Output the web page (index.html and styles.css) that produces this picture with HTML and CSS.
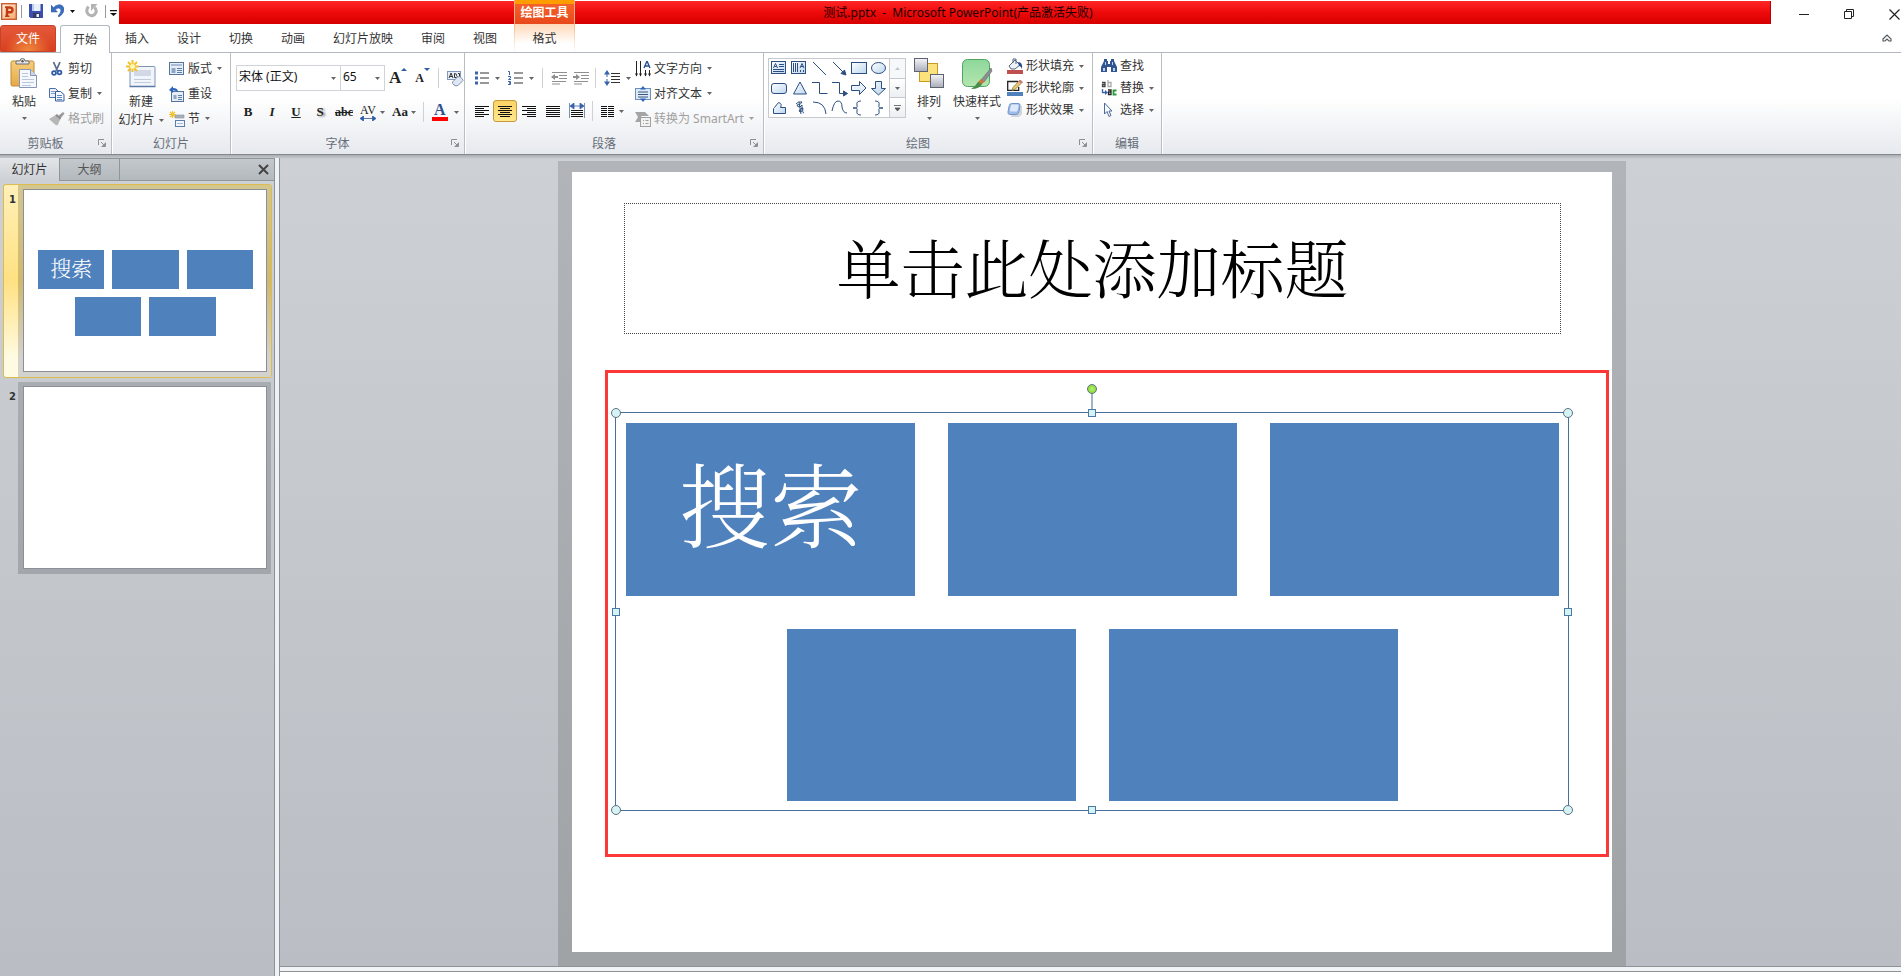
FILE: index.html
```html
<!DOCTYPE html>
<html lang="zh-CN">
<head>
<meta charset="utf-8">
<title>测试.pptx - Microsoft PowerPoint</title>
<link rel="stylesheet" href="styles.css">
</head>
<body>
<svg class="defs" aria-hidden="true">
  <defs>
    <linearGradient id="gBlue" x1="0" y1="0" x2="1" y2="1"><stop offset="0" stop-color="#fff"/><stop offset="1" stop-color="#bcd6ef"/></linearGradient>
    <linearGradient id="gGrey" x1="0" y1="0" x2="0" y2="1"><stop offset="0" stop-color="#f4f5f8"/><stop offset="1" stop-color="#a9adb8"/></linearGradient>
    <linearGradient id="gGold" x1="0" y1="0" x2="0" y2="1"><stop offset="0" stop-color="#f7cf78"/><stop offset="1" stop-color="#e5a94a"/></linearGradient>
    <linearGradient id="gGreen" x1="0" y1="0" x2="0" y2="1"><stop offset="0" stop-color="#8ed79b"/><stop offset="1" stop-color="#b4e6ae"/></linearGradient>
    <linearGradient id="gOrange" x1="0" y1="0" x2="1" y2="1"><stop offset="0" stop-color="#fff3e4"/><stop offset="1" stop-color="#f6a86a"/></linearGradient>
    <symbol id="caret" viewBox="0 0 5 3"><path d="M0 0h5L2.500 3z" fill="currentColor"/></symbol>
    <symbol id="launch" viewBox="0 0 8 8"><path d="M.5 6V.5H6M3 3l3.500 3.500M7.500 3.500v4h-4" fill="none" stroke="#8b8f96"/><path d="M7 4v3H4z" fill="#8b8f96"/></symbol>
  </defs>
</svg>

<div class="app">
  <header class="titlebar">
    <div class="quick">
      <svg class="logo" width="16" height="17" viewBox="0 0 16 17"><rect x=".7" y=".7" width="14.600" height="15.600" fill="url(#gOrange)" stroke="#cf5b2e" stroke-width="1.400"/><path d="M6 13V4.500h2.500q3 0 3 2.400T8.500 9.300H6" fill="none" stroke="#c23b12" stroke-width="2.400"/><path d="M4 13.300h4.500M4 4.200h2" stroke="#c23b12" stroke-width="1.500"/></svg>
      <i class="qsep"></i>
      <button class="qbtn save" aria-label="保存"><svg width="14" height="14" viewBox="0 0 14 14"><path d="M0 0h14v14H1.500L0 12.500z" fill="#3b4fae"/><path d="M3 0h8.500v7H3z" fill="#e9f0fb"/><path d="M3 0h2v7H3z" fill="#b9cdf0"/><path d="M4 9h7v5H4z" fill="#333b63"/><path d="M7.500 10h2.500v3H7.500z" fill="#eef"/></svg></button>
      <button class="qbtn undo" aria-label="撤消"><svg width="13" height="14" viewBox="0 0 13 14"><path d="M0 1v7h6.500L4.300 5.800Q7 3 9 4.500q2.500 2.300-2 7.500l1 1q6-4.500 4.800-9Q11.300.3 7.500.8 4.500 1.200 2.500 3.600z" fill="#3a6fc0" stroke="#2a56a0" stroke-width=".5"/></svg></button>
      <svg class="ucaret" width="5" height="3"><use href="#caret"/></svg>
      <button class="qbtn redo" aria-label="恢复"><svg width="13" height="14" viewBox="0 0 13 14"><path d="M3.500 2.500Q0 7 3.500 10.500q5 3 7.500-2 .8-3-1.500-5" fill="none" stroke="#b3b3b3" stroke-width="3"/><path d="M6 0h6.500L6 7z" fill="#b3b3b3"/></svg></button>
      <i class="qsep"></i>
      <button class="qbtn more" aria-label="自定义"><svg width="7" height="6" viewBox="0 0 7 6"><path d="M0 0h7v1.200H0zM0 3h7L3.500 6z" fill="#111"/></svg></button>
    </div>
    <div class="caption">测试.pptx&nbsp; -&nbsp; Microsoft PowerPoint(产品激活失败)</div>
    <div class="context">绘图工具</div>
    <div class="winctl">
      <button aria-label="最小化"><svg width="11" height="11"><path d="M0 5.500h10" stroke="#222"/></svg></button>
      <button aria-label="还原"><svg width="11" height="11"><path d="M.5 2.500h7v7h-7zM2.500 2V.5h7v7H8" fill="none" stroke="#222"/></svg></button>
      <button aria-label="关闭"><svg width="11" height="11"><path d="M.5.5l10 10M10.500.5l-10 10" stroke="#222" stroke-width="1.200"/></svg></button>
    </div>
  </header>

  <nav class="tabs">
    <button class="file">文件</button>
    <button class="tab on">开始</button>
    <button class="tab">插入</button>
    <button class="tab">设计</button>
    <button class="tab">切换</button>
    <button class="tab">动画</button>
    <button class="tab">幻灯片放映</button>
    <button class="tab">审阅</button>
    <button class="tab">视图</button>
    <button class="tab format">格式</button>
    <button class="fold" aria-label="折叠功能区"><svg width="10" height="8" viewBox="0 0 10 8"><path d="M1 5L5 1l4 4v2H7L5 5 3 7H1z" fill="none" stroke="#555b63" stroke-width="1.200"/></svg></button>
  </nav>

  <section class="ribbon">
    <div class="group clip">
      <div class="gbody">
        <button class="big paste">
          <svg width="28" height="32" viewBox="0 0 28 32"><rect x="1" y="3" width="23" height="25" rx="1.500" fill="url(#gGold)" stroke="#c08a35"/><path d="M6 6V3h4q0-2.500 2.500-2.500T15 3h4v3z" fill="#e8e8ea" stroke="#6d6d72"/><circle cx="12.500" cy="3.200" r="1.200" fill="#555"/><path d="M9.500 11.500h11l6 6v12h-17z" fill="#f4f7fc" stroke="#8796b4"/><path d="M20.500 11.500v6h6" fill="#cbd7ea" stroke="#8796b4"/><path d="M12 15.500h6M12 18.500h6M12 21.500h12M12 24.500h12M12 27.500h9" stroke="#b9c5d8"/></svg>
          <span>粘贴</span><svg class="caret" width="5" height="3"><use href="#caret"/></svg>
        </button>
        <div class="stack">
          <button class="cmd"><svg width="16" height="16" viewBox="0 0 16 16"><path d="M4.500 1l4 9M11 1L7 10" stroke="#5b7086" stroke-width="1.800" fill="none"/><circle cx="5" cy="12" r="1.900" fill="none" stroke="#2f5da8" stroke-width="1.800"/><circle cx="10.500" cy="11.500" r="1.900" fill="none" stroke="#2f5da8" stroke-width="1.800"/></svg>剪切</button>
          <button class="cmd"><svg width="16" height="16" viewBox="0 0 16 16"><path d="M.5 2.500h6l3 3v6h-9z" fill="#eaf1fb" stroke="#4d6fa8"/><path d="M2 5.500h4M2 7.500h4" stroke="#7f9fd0"/><path d="M6.500 5.500h5l3.500 3v6.500H6.500z" fill="#f4f8ff" stroke="#345a9a"/><path d="M8 9.500h5M8 11.500h5M8 13.500h5" stroke="#5d86c4"/></svg>复制<svg class="caret" width="5" height="3"><use href="#caret"/></svg></button>
          <button class="cmd off"><svg width="16" height="16" viewBox="0 0 16 16"><path d="M14 1l1.500 1.500-4 5-3-2z" fill="#9a9a9a"/><path d="M0 8l6-3.500 5 4.500-2.500 5.500-2.500-1z" fill="#b6b6b6"/><path d="M6 4.500l2-1.500 4 4-1 2z" fill="#8d8d8d"/></svg>格式刷</button>
        </div>
      </div>
      <div class="gname wide">剪贴板<svg class="launch" width="8" height="8"><use href="#launch"/></svg></div>
    </div>

    <div class="group slides">
      <div class="gbody">
        <button class="big newslide">
          <svg width="30" height="30" viewBox="0 0 30 30"><rect x="4" y="6.500" width="25" height="20" rx="1" fill="#f2f5fb" stroke="#7e94b8"/><rect x="8" y="10" width="17" height="6" fill="#d2d8e6"/><path d="M8 19.500h17M8 22.500h17" stroke="#c3cbdb"/><path d="M3.500 26.500h26" stroke="#5c7aa8" stroke-width="1.500"/><path d="M6.500 0v12M0 6.500h13M2 2l9 9M11 2l-9 9" stroke="#f2c12a" stroke-width="2"/><circle cx="6.500" cy="6.500" r="2.500" fill="#fff7b8"/></svg>
          <span>新建</span><span class="line">幻灯片<svg class="caret" width="5" height="3"><use href="#caret"/></svg></span>
        </button>
        <div class="stack">
          <button class="cmd"><svg width="16" height="14" viewBox="0 0 16 14"><rect x=".5" y=".5" width="14" height="12" fill="#e6edf6" stroke="#55749c"/><path d="M2 3h11" stroke="#a9bcd4" stroke-width="2"/><path d="M2.500 6h4v5h-4z" fill="#8ea6c4"/><path d="M8 6.500h5M8 8.500h5M8 10.500h5" stroke="#5c7fa8"/></svg>版式<svg class="caret" width="5" height="3"><use href="#caret"/></svg></button>
          <button class="cmd"><svg width="16" height="16" viewBox="0 0 16 16"><rect x="2.500" y="5.500" width="12" height="10" fill="#e6edf6" stroke="#55749c"/><path d="M4.500 9h3v4h-3z" fill="#8ea6c4"/><path d="M9 9.500h4M9 11.500h4M9 13.500h4" stroke="#5c7fa8"/><path d="M0 4l4-4v2q5 0 5 4-2-2-5-1.500V7z" fill="#2f63bd"/></svg>重设</button>
          <button class="cmd"><svg width="16" height="16" viewBox="0 0 16 16"><path d="M6 4h9v3H6z" fill="#aab1bf" stroke="#8890a0" stroke-width=".6"/><rect x="6.500" y="9.500" width="9" height="6" fill="#f2f5fb" stroke="#5c7fa8"/><path d="M8 12.500h6" stroke="#a9bcd4"/><path d="M3.500 0v7M0 3.500h7M1 1l5 5M6 1L1 6" stroke="#efc23a" stroke-width="1.200"/></svg>节<svg class="caret" width="5" height="3"><use href="#caret"/></svg></button>
        </div>
      </div>
      <div class="gname">幻灯片</div>
    </div>

    <div class="group font">
      <div class="gbody col">
        <div class="row top">
          <label class="combo name"><select aria-label="字体"><option>宋体 (正文)</option></select><svg class="caret" width="5" height="3"><use href="#caret"/></svg></label>
          <label class="combo size"><select aria-label="字号"><option>65</option></select><svg class="caret" width="5" height="3"><use href="#caret"/></svg></label>
          <button class="glyph grow">A<svg width="6" height="3"><path d="M0 3h6L3 0z" fill="#2f5da8"/></svg></button>
          <button class="glyph shrink">A<svg width="6" height="3"><path d="M0 0h6L3 3z" fill="#2f5da8"/></svg></button>
          <i class="sep"></i>
          <button class="ico" aria-label="清除格式"><svg width="17" height="17" viewBox="0 0 17 17"><rect x=".5" y="1.500" width="13" height="8" fill="#e8eef8" stroke="#7f98bf"/><path d="M2 8l2-5 2 5M3 6.500h2M7.500 3.500v4h2q1.500-1 0-2 1-1.500-2-2M11 3.500h1.500v4H11" fill="none" stroke="#333"/><path d="M5.500 12l5-5q2-1 3.500.5t2 3l-5 5q-2 1-4-.5t-1.500-3z" fill="#dfe7f3" stroke="#8294b3"/></svg></button>
        </div>
        <div class="row bottom">
          <button class="glyph bold">B</button><button class="glyph italic">I</button><button class="glyph under">U</button><button class="glyph shadow">S</button><button class="glyph abc">abc</button>
          <button class="glyph av"><span>AV</span><svg width="16" height="5" viewBox="0 0 16 5"><path d="M0 2.500L3.500 0v5zM16 2.500L12.500 0v5zM3 2.500h10" fill="#2f5da8" stroke="#2f5da8" stroke-width=".8"/></svg></button><svg class="caret" width="5" height="3"><use href="#caret"/></svg>
          <button class="glyph aa">Aa</button><svg class="caret" width="5" height="3"><use href="#caret"/></svg>
          <i class="sep"></i>
          <button class="glyph color"><span>A</span></button><svg class="caret" width="5" height="3"><use href="#caret"/></svg>
        </div>
      </div>
      <div class="gname wide">字体<svg class="launch" width="8" height="8"><use href="#launch"/></svg></div>
    </div>

    <div class="group para">
      <div class="gbody">
        <div class="pcol">
          <div class="row top">
            <button class="ico" aria-label="项目符号"><svg width="14" height="14" viewBox="0 0 14 14"><path d="M5 2h9M5 7h9M5 12h9" stroke="#333" stroke-width="1.200"/><path d="M0 .5h3v3H0zM0 5.500h3v3H0zM0 10.500h3v3H0z" fill="#3a63ad"/></svg></button><svg class="caret" width="5" height="3"><use href="#caret"/></svg>
            <button class="ico" aria-label="编号"><svg width="15" height="14" viewBox="0 0 15 14"><path d="M6 2h9M6 7h9M6 12h9" stroke="#333" stroke-width="1.200"/><path d="M0 .5h1.500V4M0 5.500h2.500v1.500L.5 8.500H3M0 10.500h2.500V12H1h1.500v1.500H0" fill="none" stroke="#3a63ad"/></svg></button><svg class="caret" width="5" height="3"><use href="#caret"/></svg>
            <i class="sep"></i>
            <button class="ico" aria-label="降低列表级别"><svg width="16" height="14" viewBox="0 0 16 14"><path d="M1 1.500h15M8 4.500h8M8 7.500h8M1 10.500h14M1 13h8" stroke="#8f8f8f"/><path d="M0 6l4-3v6z" fill="#8f8f8f"/><path d="M3 6h4" stroke="#8f8f8f" stroke-width="2"/></svg></button>
            <button class="ico" aria-label="提高列表级别"><svg width="16" height="14" viewBox="0 0 16 14"><path d="M1 1.500h15M8 4.500h8M8 7.500h8M1 10.500h14M1 13h8" stroke="#8f8f8f"/><path d="M7 6L3 3v6z" fill="#8f8f8f"/><path d="M0 6h4" stroke="#8f8f8f" stroke-width="2"/></svg></button>
            <i class="sep"></i>
            <button class="ico" aria-label="行距"><svg width="16" height="16" viewBox="0 0 16 16"><path d="M7 3.500h9M7 6.500h9M7 9.500h9M7 12.500h9" stroke="#333" stroke-width="1.200"/><path d="M3 0l3 4.500H0zM3 16l3-4.500H0z" fill="#3a63ad"/><path d="M3 4v8" stroke="#3a63ad" stroke-dasharray="3 2"/></svg></button><svg class="caret" width="5" height="3"><use href="#caret"/></svg>
          </div>
          <div class="row bottom">
            <button class="ico" aria-label="左对齐"><svg width="14" height="11"><path d="M0 .5h14M0 2.500h9M0 4.500h14M0 6.500h9M0 8.500h14M0 10.500h9" stroke="#111"/></svg></button>
            <button class="ico active" aria-label="居中"><svg width="14" height="11"><path d="M0 .5h14M2 2.500h10M0 4.500h14M2 6.500h10M0 8.500h14M2 10.500h10" stroke="#111"/></svg></button>
            <button class="ico" aria-label="右对齐"><svg width="14" height="11"><path d="M0 .5h14M5 2.500h9M0 4.500h14M5 6.500h9M0 8.500h14M5 10.500h9" stroke="#111"/></svg></button>
            <button class="ico" aria-label="两端对齐"><svg width="14" height="11"><path d="M0 .5h14M0 2.500h14M0 4.500h14M0 6.500h14M0 8.500h14M0 10.500h14" stroke="#111"/></svg></button>
            <button class="ico" aria-label="分散对齐"><svg width="16" height="16"><path d="M.5 0v15M15.500 0v15" stroke="#7891b5"/><path d="M1 3l4-3v6zM15 3l-4-3v6zM4 3h8" fill="#3a63ad" stroke="#3a63ad" stroke-width=".8"/><path d="M2 7.500h12M2 9.500h12M2 11.500h12M2 13.500h12" stroke="#111"/></svg></button>
            <i class="sep"></i>
            <button class="ico" aria-label="分栏"><svg width="13" height="11"><path d="M0 .5h6M0 2.500h6M0 4.500h6M0 6.500h6M0 8.500h6M0 10.500h6M7 .5h6M7 2.500h6M7 4.500h6M7 6.500h6M7 8.500h6M7 10.500h6" stroke="#111"/></svg></button><svg class="caret" width="5" height="3"><use href="#caret"/></svg>
          </div>
        </div>
        <div class="stack">
          <button class="cmd"><svg width="16" height="16" viewBox="0 0 16 16"><path d="M1.500 0v15M5.500 0v15M10.500 9v6M14.500 9v6" stroke="#222"/><path d="M0 12.500h3L1.500 15.500zM4 12.500h3L5.500 15.500zM9 12.500h3l-1.500 3zM13 12.500h3l-1.500 3z" fill="#222"/><path d="M9 7l3-7 3 7M10 5h4" stroke="#27508f" stroke-width="1.400" fill="none"/></svg>文字方向<svg class="caret" width="5" height="3"><use href="#caret"/></svg></button>
          <button class="cmd"><svg width="16" height="16" viewBox="0 0 16 16"><rect x=".5" y="2.500" width="15" height="11" fill="#dcebfa" stroke="#6d8fbd"/><path d="M3 6h10M3 8.500h10M3 11h10" stroke="#3c557a"/><path d="M8 0l3 3.500H5zM8 16l3-3.500H5z" fill="#2f63bd"/></svg>对齐文本<svg class="caret" width="5" height="3"><use href="#caret"/></svg></button>
          <button class="cmd off"><svg width="16" height="16" viewBox="0 0 16 16"><path d="M0 1h10l4 4H6l2 3-3 3H0l3-5z" fill="#a5a5a5"/><rect x="5.500" y="6.500" width="10" height="9" fill="#f2f2f2" stroke="#a0a0a0"/><path d="M8 9.500h1M10.500 9.500h3M8 12.500h1M10.500 12.500h3" stroke="#a0a0a0"/></svg>转换为 SmartArt<svg class="caret" width="5" height="3"><use href="#caret"/></svg></button>
        </div>
      </div>
      <div class="gname wide">段落<svg class="launch" width="8" height="8"><use href="#launch"/></svg></div>
    </div>

    <div class="group draw">
      <div class="gbody">
        <div class="gallery">
          <svg class="shapes" width="120" height="58" viewBox="0 0 120 58" fill="none" stroke="#2d4f80">
            <rect x="2.500" y="2.500" width="14" height="12" fill="url(#gBlue)"/><path d="M4.500 9l2-4.500 2 4.500M5.500 7.500h2M10 5.500h5M10 7.500h5M4 10.500h11M4 12.500h11"/>
            <rect x="22.500" y="2.500" width="14" height="12" fill="url(#gBlue)"/><path d="M31 9l2-4.500 2 4.500M32 7.500h2M24.500 4v9M26.500 4v9M28.500 4v9M31.500 11v2M34.500 11v2"/>
            <path d="M44 3l13 13M64 3l11 11"/><path d="M77 16l-5-1.500 3.500-3.500z" fill="#2d4f80"/>
            <rect x="82.500" y="3.500" width="15" height="11" fill="url(#gBlue)"/><ellipse cx="109.500" cy="9" rx="7" ry="5.500" fill="url(#gBlue)"/>
            <rect x="2.500" y="24.500" width="15" height="10" rx="2.500" fill="url(#gBlue)"/><path d="M31 23l6.500 12h-13z" fill="url(#gBlue)"/>
            <path d="M43 23.500h7.500v11h8M63 23.500h7.500v11h6"/><path d="M78.500 34.500l-4-2.500v5z" fill="#2d4f80"/>
            <path d="M82.500 26.500h8v-4l6.500 6.500-6.500 6.500v-4h-8zM106.500 22.500h6v7h4l-7 6.500-7-6.500h4z" fill="url(#gBlue)"/>
            <path d="M4.500 54.500h12v-6h-5q2-4-2-5l-4 5-1 1z" fill="url(#gBlue)"/>
            <path d="M27 45q2-3 6-2-1 3-5 3 0 2 3 2l2-2v6q-2 2-3 0 1-3 4-3-1 5 1 5M30 43l2 12"/>
            <path d="M44 43q12 0 13 12M63 52q2-10 6-10t4 6q1 6 5 6M92 42q-5 0-4 4t-4 3q5-1 4 3t4 4M106 42q5 0 4 4t4 3q-5-1-4 3t-4 4"/>
          </svg>
          <div class="gscroll">
            <button class="dim" aria-label="上一行"><svg width="5" height="3"><path d="M0 3h5L2.500 0z" fill="#c4c6ca"/></svg></button>
            <button aria-label="下一行"><svg class="caret" width="5" height="3"><use href="#caret"/></svg></button>
            <button aria-label="其他"><svg width="7" height="6"><path d="M0 .5h7M1 3h5L3.500 6z" stroke="#555" stroke-width=".8" fill="#555"/></svg></button>
          </div>
        </div>
        <button class="big arrange">
          <svg width="32" height="32" viewBox="0 0 32 32"><rect x="6.500" y="5.500" width="18" height="18" fill="#fbe27c" stroke="#c99a1c"/><rect x="1.500" y=".5" width="13" height="13" fill="url(#gGrey)" stroke="#5d6270"/><rect x="17.500" y="16.500" width="13" height="13" fill="url(#gGrey)" stroke="#5d6270"/></svg>
          <span>排列</span><svg class="caret" width="5" height="3"><use href="#caret"/></svg>
        </button>
        <button class="big quickst">
          <svg width="32" height="32" viewBox="0 0 32 32"><rect x="1.500" y="1.500" width="27" height="27" rx="5" fill="url(#gGreen)" stroke="#4fa661"/><path d="M30 10L20 22l3 2 8-11z" fill="#8a8f95" stroke="#666" stroke-width=".6"/><path d="M20 21l3.500 2.500-3 3-4-2z" fill="#c9763b"/><path d="M17 24l4 2q-2 5-11 5 4-2 7-7z" fill="#4a8c4c"/></svg>
          <span>快速样式</span><svg class="caret" width="5" height="3"><use href="#caret"/></svg>
        </button>
        <div class="stack tight">
          <button class="cmd"><svg width="16" height="16" viewBox="0 0 16 16"><path d="M0 12h16v4H0z" fill="#c0504d"/><path d="M2 8l6-6 5 5-5 4H4z" fill="#eef2f8" stroke="#54647e"/><path d="M6 5V1h3v5" fill="none" stroke="#54647e"/><path d="M11 4q5 0 4 7-1-3-3-3z" fill="#2b4c8c"/></svg>形状填充<svg class="caret" width="5" height="3"><use href="#caret"/></svg></button>
          <button class="cmd"><svg width="16" height="16" viewBox="0 0 16 16"><path d="M0 12h16v4H0z" fill="#4f81bd"/><path d="M11 1.500H.7v8.800h11V7" fill="#fff" stroke="#222" stroke-width="1.300"/><path d="M13 0l2.500 2L8 9.500 5 10.500 6 7.500z" fill="#e9c868" stroke="#7b6430" stroke-width=".7"/><path d="M13 0l2.500 2-1.500 1.500L11.500 1.500z" fill="#d4758a"/></svg>形状轮廓<svg class="caret" width="5" height="3"><use href="#caret"/></svg></button>
          <button class="cmd"><svg width="16" height="16" viewBox="0 0 16 16"><path d="M6 4h9v8l-3 3H4z" fill="#b5bdca" opacity=".6"/><path d="M4.500 1.500h6.500q2.500 0 2 2L12 9.500q-.5 3-3 3H3q-2.500 0-2-2.500l1-5.500q.5-3 2.500-3z" fill="#9dbbe6" stroke="#7295cb"/><path d="M5 2.500h5.500q1.300 0 1 1.500l-.8 4q-.3 1.500-1.500 1.500H4q-1.200 0-1-1.500l.7-4Q4 2.500 5 2.500z" fill="#dce9fb"/></svg>形状效果<svg class="caret" width="5" height="3"><use href="#caret"/></svg></button>
        </div>
      </div>
      <div class="gname wide">绘图<svg class="launch" width="8" height="8"><use href="#launch"/></svg></div>
    </div>

    <div class="group edit">
      <div class="gbody">
        <div class="stack tight">
          <button class="cmd"><svg width="16" height="14" viewBox="0 0 16 14"><path d="M3 0h3v2h1v3h2V2h1V0h3v2l3 6v5h-6V8H6v5H0V8l3-6z" fill="#33558f"/><path d="M2 9h2v3H2zM12 9h2v3h-2zM4 3h1v3H4zM11 3h1v3h-1z" fill="#b9d2f2"/></svg>查找</button>
          <button class="cmd"><svg width="16" height="16" viewBox="0 0 16 16"><g fill="none" stroke-width="1.300"><path d="M1 2.500h3v4H1.500V4.500H4" stroke="#444"/><path d="M7 0v6.500h3v-4H7" stroke="#aaa"/><path d="M1.500 9v3.500h3" stroke="#3a63ad"/><path d="M7 10h3v4.500H7.500V12H10" stroke="#222"/><path d="M15.500 10.500h-3v4h3" stroke="#2a9a3c" stroke-width="1.800"/></g><path d="M4 10l3 2.500L4 15z" fill="#3a63ad"/></svg>替换<svg class="caret" width="5" height="3"><use href="#caret"/></svg></button>
          <button class="cmd"><svg width="16" height="16" viewBox="0 0 16 16"><path d="M3.500 1v11l2.500-2.500 2 5 2-1-2-4.500H11z" fill="#f5f9ff" stroke="#4d6a9a"/></svg>选择<svg class="caret" width="5" height="3"><use href="#caret"/></svg></button>
        </div>
      </div>
      <div class="gname">编辑</div>
    </div>
  </section>

  <main class="work">
    <aside class="pane">
      <div class="ptabs">
        <button class="ptab on">幻灯片</button>
        <button class="ptab">大纲</button>
        <button class="pclose" aria-label="关闭"><svg width="11" height="11"><path d="M1 1l9 9M10 1l-9 9" stroke="#444" stroke-width="2"/></svg></button>
      </div>
      <div class="thumb current">
        <span class="num">1</span>
        <div class="mat"><div class="mini">
          <div class="tiles"><div class="tile">搜索</div><div class="tile"></div><div class="tile"></div><div class="tile shift"></div><div class="tile"></div></div>
        </div></div>
      </div>
      <div class="thumb">
        <span class="num">2</span>
        <div class="mat"><div class="mini"></div></div>
      </div>
    </aside>
    <div class="splitter"></div>
    <div class="editor">
      <div class="canvas">
        <div class="halo">
          <article class="slide">
            <h1 class="heading">单击此处添加标题</h1>
            <div class="mark">
              <div class="selection">
                <div class="tiles"><div class="tile">搜索</div><div class="tile"></div><div class="tile"></div><div class="tile shift"></div><div class="tile"></div></div>
                <i class="stem"></i>
                <i class="h c tl"></i><i class="h c tr"></i><i class="h c bl"></i><i class="h c br"></i>
                <i class="h q tm"></i><i class="h q bm"></i><i class="h q ml"></i><i class="h q mr"></i>
                <i class="h c spin"></i>
              </div>
            </div>
          </article>
        </div>
      </div>
      <div class="notes"></div>
    </div>
  </main>
</div>
</body>
</html>
```

FILE: styles.css
```css
* { box-sizing: border-box; }

body {
  margin: 0;
  background: #fff;
  color: #333;
  font: 12px/16px "Noto Sans", "Noto Sans CJK SC", sans-serif;
}

button {
  margin: 0;
  padding: 0;
  border: 0;
  background: none;
  color: inherit;
  font: inherit;
  white-space: nowrap;
}

svg { display: block; flex: none; }
.defs { position: absolute; width: 0; height: 0; }
.caret { color: #666; }

.app {
  display: flex;
  flex-direction: column;
  height: 100vh;
  overflow: hidden;
}

/* Title bar */
.titlebar {
  position: relative;
  display: flex;
  flex: none;
  height: 24px;
}
.quick {
  display: flex;
  align-items: center;
  width: 119px;
  padding: 0 2px 2px 1px;
}
.qsep { width: 1px; height: 13px; background: #999; }
.logo { margin-right: 4px; }
.save { margin-left: 7px; }
.undo { margin-left: 8px; }
.ucaret { margin: 0 10px 0 6px; color: #111; }
.redo { margin-right: 7px; }
.more { margin: 3px 0 0 4px; }
.caption {
  flex: 1;
  margin-top: 1px;
  padding-left: 27px;
  background: linear-gradient(#ff2626, #ee0a0a 50%, #d60000);
  border-right: 1px solid #b00;
  color: #1c0000;
  line-height: 24px;
  text-align: center;
}
.context {
  position: absolute;
  top: 0;
  left: 514px;
  width: 61px;
  height: 24px;
  border: solid #f7b08a;
  border-width: 0 1px;
  background: linear-gradient(#ff9c00 4px, #f4622a 4px, #e8481a);
  color: #fff;
  font-weight: 700;
  line-height: 26px;
  text-align: center;
}
.winctl {
  display: flex;
  width: 130px;
  padding-left: 11px;
  overflow: hidden;
}
.winctl button {
  display: grid;
  flex: 0 0 45px;
  place-items: center;
  padding-top: 4px;
}

/* Ribbon tabs */
.tabs {
  display: flex;
  flex: none;
  height: 29px;
  border-bottom: 1px solid #b3b8bf;
  line-height: 30px;
}
.file {
  width: 56px;
  margin: 1px 4px 0 0;
  border: 1px solid #c5432a;
  border-radius: 3px 3px 0 0;
  background: radial-gradient(ellipse at 50% 100%, #f08a3c, transparent 60%), linear-gradient(#e4593a, #d8401f);
  color: #fff;
  line-height: 25px;
}
.tab { padding: 0 14px; line-height: 29px; }
.tab.on {
  width: 50px;
  margin: 1px 1px -1px 0;
  padding: 0;
  border: 1px solid #b3b8bf;
  border-bottom: 0;
  border-radius: 3px 3px 0 0;
  background: #fff;
  line-height: 24px;
}
.tab.format {
  width: 61px;
  margin-left: 3px;
  padding: 0;
  border: solid;
  border-width: 0 1px;
  border-image: linear-gradient(#f7b880, #fff) 1;
  background: linear-gradient(#ffd9b8, #fff 70%);
}
.fold { margin: 0 9px 0 auto; }

/* Ribbon */
.ribbon {
  display: flex;
  flex: none;
  height: 102px;
  border-bottom: 1px solid #868a90;
  background: linear-gradient(#fff 45%, #f4f5f7 70%, #e6e9ee);
}
.group {
  display: flex;
  flex: none;
  flex-direction: column;
  border-right: 1px solid #b9bdc4;
  box-shadow: 1px 0 #fff;
}
.gbody { display: flex; height: 80px; }
.gbody.col { flex-direction: column; }
.gname {
  position: relative;
  color: #666d78;
  line-height: 21px;
  text-align: center;
}
.gname.wide { padding-right: 20px; }
.launch { position: absolute; right: 5px; top: 6px; }

.clip { width: 112px; }
.slides { width: 119px; }
.font { width: 234px; }
.para { width: 299px; }
.draw { width: 329px; }
.edit { width: 69px; }

.big {
  display: flex;
  flex-direction: column;
  align-items: center;
  width: 46px;
  padding-top: 5px;
}
.big > svg:first-child { height: 32px; margin-bottom: 4px; }
.big .caret { margin-top: 7px; }
.big.paste { width: 48px; }
.big.newslide { width: 50px; margin-left: 4px; padding-top: 7px; }
.big.newslide > svg:first-child { height: 30px; }
.big .line { display: flex; align-items: center; gap: 4px; margin-top: 2px; }
.big .line .caret { margin: 0; }

.stack { display: flex; flex-direction: column; padding-top: 3px; }
.stack.tight { padding-top: 2px; }
.cmd { display: flex; align-items: center; height: 25px; }
.stack.tight .cmd { height: 22px; }
.cmd > svg:first-child { width: 16px; margin-right: 3px; }
.cmd .caret { margin-left: 5px; }
.cmd.off, .cmd.off .caret { color: #a0a0a0; }
.clip .stack { margin-left: 1px; }
.slides .stack { margin-left: 3px; }

.row { display: flex; align-items: center; }
.sep { width: 1px; height: 20px; background: #cfd1d5; }
.ico { display: grid; place-items: center; height: 22px; }

/* Font group */
.font .top { height: 26px; margin: 12px 0 0 5px; }
.font .bottom { height: 24px; margin: 9px 0 0 5px; }
.combo { position: relative; flex: none; height: 26px; border: 1px solid #d0d3d8; background: #fff; }
.combo select {
  display: block;
  width: 100%;
  height: 22px;
  padding: 0 2px;
  border: 0;
  background: none;
  color: #111;
  font: inherit;
  appearance: none;
}
.combo .caret { position: absolute; top: 11px; right: 4px; }
.combo.name { width: 105px; }
.combo.size { width: 44px; border-left: 0; }
.glyph {
  color: #222;
  font: 700 13px/20px "Liberation Serif", serif;
}
.grow, .shrink { display: flex; }
.grow { margin-left: 4px; font-size: 17px; }
.shrink { margin: 0 8px 0 8px; font-size: 12px; }
.font .top .ico { margin-left: 8px; }
.bold, .italic, .under, .shadow { width: 24px; }
.italic { font-style: italic; }
.under { text-decoration: underline; }
.shadow { text-shadow: 2px 1px 2px #888; }
.abc { width: 24px; font-size: 12px; text-decoration: line-through; }
.av { display: grid; place-items: center; width: 24px; font-size: 12px; line-height: 12px; font-weight: 400; }
.aa { margin: 0 3px 0 7px; }
.font .bottom .sep { margin-left: 7px; }
.color { display: grid; justify-items: center; width: 16px; margin: 0 6px 0 8px; border-bottom: 4px solid #f00; color: #2f5090; font-size: 16px; line-height: 14px; }

/* Paragraph group */
.pcol { width: 168px; padding-left: 10px; }
.pcol .top { height: 22px; margin-top: 14px; }
.pcol .bottom { height: 22px; margin-top: 11px; }
.pcol .top .ico + .caret { margin: 0 8px 0 6px; }
.pcol .top .sep + .ico { margin: 0 6px 0 8px; }
.pcol .top .ico + .sep { margin-left: 6px; }
.pcol .top .sep ~ .ico + .caret { margin: 0; }
.pcol .bottom .ico { width: 24px; }
.pcol .bottom .ico:first-child { width: 18px; justify-content: start; }
.pcol .bottom .active { border: 1px solid #c49a3c; border-radius: 3px; background: linear-gradient(#fbd265, #ffe88e); }
.pcol .bottom .sep { margin: 0 2px 0 3px; }
.para .stack { margin-left: 2px; }

/* Drawing group */
.gallery { display: flex; flex: none; width: 138px; height: 60px; margin: 5px 0 0 4px; border: 1px solid #c6c9ce; background: #fff; }
.gscroll { flex: 1; display: flex; flex-direction: column; border-left: 1px solid #c6c9ce; }
.gscroll button { display: grid; flex: 1; place-items: center; border-bottom: 1px solid #c6c9ce; background: linear-gradient(#fff, #eceef1); }
.gscroll button:last-child { border: 0; }
.gscroll .dim { background: #f7f8f9; }
.big.arrange { width: 46px; flex: none; }
.big.quickst { width: 50px; flex: none; }
.draw .stack { margin-left: 5px; }
.edit .stack { margin-left: 8px; }

/* Workspace */
.work {
  display: flex;
  flex: 1;
  min-height: 0;
  padding-top: 3px;
  background: linear-gradient(#a9acb1, #cdd0d4 4px, #babdc3);
}
.pane { flex: none; width: 275px; border-right: 1px solid #8d9298; }
.ptabs {
  display: flex;
  align-items: center;
  height: 23px;
  margin-bottom: 3px;
  border: solid #8d969b;
  border-width: 1px 0;
  background: linear-gradient(#c3c8cc, #b4b9be);
}
.ptab { width: 60px; height: 21px; border-right: 1px solid #8d969b; color: #555; line-height: 19px; }
.ptab.on { height: 23px; background: linear-gradient(#e2e5e8, #cdd0d4); color: #333; }
.pclose { margin: 0 5px 0 auto; }
.thumb { display: flex; margin: 0 2px 3px 3px; border: 1px solid transparent; border-radius: 3px; }
.thumb.current { border-color: #dcbc4c; background: linear-gradient(#fff0b8, #ffe182 50%, #fffbe2 90%); }
.num { width: 14px; padding: 8px 0 0 3px; color: #333; font: 700 10px/14px "DejaVu Sans", sans-serif; text-align: center; }
.mat { flex: 1; padding: 4px 4px 5px 5px; background: linear-gradient(#a9acb1, #a3a7ab); }
.current .mat { background: linear-gradient(#d3c68f, #d0b96c 50%, #d3d2cc 90%); }
.mini { aspect-ratio: 4 / 3; padding: 60px 13px 35px 14px; border: 1px solid #8c8f99; background: #fff; }
.tiles {
  display: grid;
  grid-template: repeat(2, minmax(0, 1fr)) / repeat(6, minmax(0, 1fr));
  gap: 33px;
  height: 100%;
}
.tile {
  display: grid;
  grid-column: span 2;
  place-items: center;
  padding-bottom: 16px;
  background: #4f81bd;
  color: #fff;
  font: 300 92px/120px "Noto Serif CJK SC", "Noto Sans CJK SC", serif;
}
.tile.shift { grid-column: 2 / span 2; }
.mini .tiles { gap: 8px; }
.mini .tile { padding-bottom: 6px; font-size: 21px; line-height: 28px; }
.splitter { flex: none; width: 5px; border-right: 1px solid #8d9298; background: #edf2f4; }

.editor { display: flex; flex: 1; flex-direction: column; min-width: 0; }
.canvas { display: flex; flex: 1; justify-content: center; min-height: 0; padding: 3px 0 0 3px; border-bottom: 1px solid #8d9298; }
.halo { padding: 11px 14px 14px; background: linear-gradient(#b1b4b8, #9fa3a6); }
.slide {
  display: grid;
  grid-template-rows: minmax(0, 131fr) minmax(0, 487fr);
  row-gap: 36px;
  height: 100%;
  aspect-ratio: 4 / 3;
  padding: 31px 3px 95px 33px;
  background: #fff;
}
.heading {
  display: grid;
  place-items: center;
  margin: 0 48px 0 19px;
  padding-bottom: 8px;
  border: 1px dotted #444;
  color: #000;
  font: 300 64px/80px "Noto Serif CJK SC", "Noto Sans CJK SC", serif;
}
.mark { padding: 39px 37px 43px 7px; border: 3px solid #fb3737; }
.selection { position: relative; height: 100%; padding: 10px 9px 9px 10px; border: 1px solid #4a6f9c; }

/* Selection handles */
.h { position: absolute; width: 10px; height: 10px; border: 1px solid #5d7480; background: #d5f2f4; transform: translate(-50%, -50%); }
.c { border-radius: 50%; }
.q { width: 8px; height: 8px; border-color: #4a7aa4; }
.tl, .bl, .ml { left: 0; }
.tr, .br, .mr { left: 100%; }
.tl, .tr, .tm { top: 0; }
.bl, .br, .bm { top: 100%; }
.tm, .bm, .spin { left: 50%; }
.ml, .mr { top: 50%; }
.spin { top: -24px; background: radial-gradient(#b8f26c, #7ad02c); }
.stem { position: absolute; top: -20px; left: 50%; width: 2px; height: 16px; margin-left: -1px; background: #a3b4c8; }

.notes { flex: none; height: 9px; border-top: 4px solid #f2f3f4; background: linear-gradient(#8d9298 1px, #fff 1px); }
```
